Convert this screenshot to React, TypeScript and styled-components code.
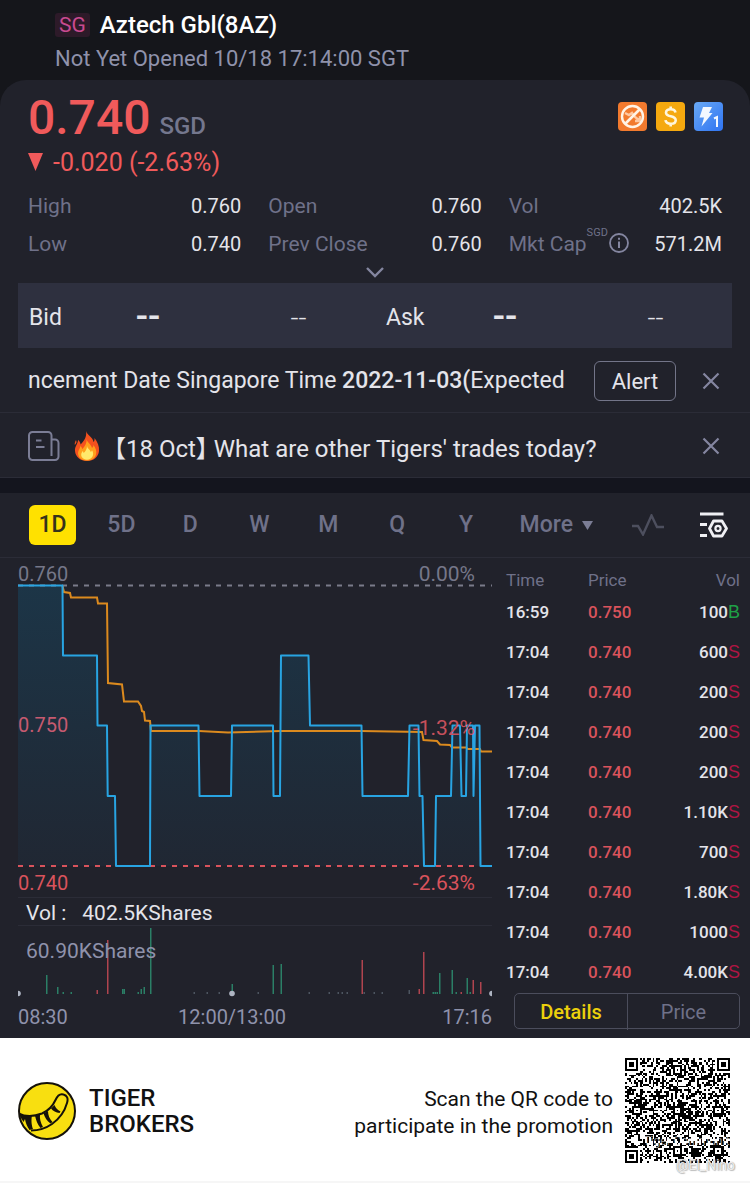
import React from 'react';
import styled, { createGlobalStyle } from 'styled-components';

const color = {
  page: '#15161b',
  panel: '#21222b',
  raised: '#2e303f',
  gap: '#14151e',
  line: '#2b2c37',
  text: '#e4e4ea',
  soft: '#8f92ab',
  muted: '#6f7189',
  red: '#f05a5b',
  yellow: '#ffe100',
};

const GlobalStyle = createGlobalStyle`
  * { box-sizing: border-box; }
  body {
    margin: 0;
    background: #ffffff;
    color: ${color.text};
    font-family: Roboto, "Noto Sans CJK SC", "Liberation Sans", sans-serif;
  }
  button {
    margin: 0;
    padding: 0;
    border: 0;
    background: none;
    color: inherit;
    font: inherit;
    cursor: pointer;
  }
  svg { display: block; }
  h1, h2, p, dl, dd, dt { margin: 0; font-weight: 400; }
`;

const Page = styled.main`
  background: ${color.page};
`;

const Header = styled.header`
  height: 80px;
  padding: 10px 24px 0 55px;
`;

const TitleRow = styled.div`
  display: flex;
  align-items: center;
  gap: 10px;
  height: 30px;
`;

const Market = styled.span`
  padding: 0 4px;
  border-radius: 3px;
  background: #2d1a29;
  color: #c94a90;
  font-size: 21px;
  line-height: 24px;
`;

const Title = styled.h1`
  color: #ffffff;
  font-size: 24px;
  font-weight: 500;
  line-height: 30px;
`;

const Status = styled.p`
  color: ${color.soft};
  font-size: 22px;
  line-height: 38px;
`;

const Quote = styled.section`
  border-radius: 26px 26px 0 0;
  background: ${color.panel};
`;

const PriceRow = styled.div`
  display: flex;
  align-items: flex-start;
  justify-content: space-between;
  height: 66px;
  padding: 10px 27px 0 28px;
`;

const Price = styled.p`
  color: ${color.red};
  font-size: 48px;
  font-weight: 500;
  line-height: 56px;
`;

const Currency = styled.span`
  margin-left: 9px;
  color: #74778e;
  font-size: 24px;
`;

const Badges = styled.div`
  display: flex;
  gap: 9px;
  padding-top: 12px;
`;

const Change = styled.p`
  display: flex;
  align-items: center;
  gap: 10px;
  height: 32px;
  padding-left: 28px;
  color: ${color.red};
  font-size: 25px;
`;

const Stats = styled.dl`
  display: grid;
  grid-template-columns: repeat(3, 1fr);
  column-gap: 27px;
  padding: 9px 28px 0;
`;

const Stat = styled.div`
  display: flex;
  align-items: center;
  justify-content: space-between;
  height: 38px;
  font-size: 20px;
  line-height: 24px;
`;

const StatName = styled.dt`
  display: flex;
  color: ${color.muted};
  font-size: 21px;
`;

const Unit = styled.span`
  margin-top: -6px;
  font-size: 11px;
  line-height: 14px;
`;

const ExpandButton = styled.button`
  display: flex;
  align-items: center;
  justify-content: center;
  width: 100%;
  height: 20px;
  padding-bottom: 2px;
`;

const BidAsk = styled.div`
  display: grid;
  grid-template-columns: 1fr 1fr;
  margin: 0 18px;
  background: ${color.raised};
`;

const Side = styled.div`
  display: grid;
  grid-template-columns: 80px 100px 1fr;
  align-items: center;
  height: 65px;
  padding-top: 3px;
  font-size: 23px;
  text-align: center;
`;

const SideName = styled.span`
  padding-left: 11px;
  text-align: left;
`;

const SidePrice = styled.strong`
  font-size: 36px;
  font-weight: 500;
  line-height: 40px;
`;

const SideSize = styled.span`
  padding-left: 24px;
  font-size: 28px;
  font-weight: 300;
`;

const Notice = styled.div`
  display: flex;
  align-items: center;
  height: 65px;
  padding: 2px 30px 0 28px;
  border-bottom: 1px solid ${color.line};
  font-size: 23px;
`;

const NoticeText = styled.p`
  flex: 1;
  min-width: 0;
  margin-right: 27px;
  overflow: hidden;
  white-space: nowrap;
  line-height: 34px;
`;

const Strong = styled.strong`
  font-weight: 500;
`;

const NewsLink = styled.a`
  display: flex;
  flex: 1;
  align-items: center;
  gap: 14px;
  min-width: 0;
  color: inherit;
  font-size: 24px;
  text-decoration: none;
  white-space: nowrap;
`;

const NewsTitle = styled.span`
  font-feature-settings: "halt";
`;

const AlertButton = styled.button`
  width: 82px;
  height: 40px;
  margin-right: 26px;
  border: 1px solid #737589;
  border-radius: 6px;
  font-size: 22px;
`;

const Tabs = styled.nav`
  display: flex;
  align-items: center;
  height: 80px;
  padding: 0 22px 0 18px;
  border-top: 15px solid ${color.gap};
  border-bottom: 1px solid ${color.line};
  background: ${color.panel};
  color: ${color.muted};
  font-size: 23px;
  font-weight: 500;
`;

const Tab = styled.button<{ $active?: boolean }>`
  display: flex;
  flex: 1;
  justify-content: center;
  line-height: 40px;

  span {
    min-width: 47px;
    border-radius: 6px;
    background: ${(p) => (p.$active ? color.yellow : 'transparent')};
    color: ${(p) => (p.$active ? '#35331b' : 'inherit')};
  }
`;

const MoreButton = styled.button`
  display: flex;
  align-items: center;
  gap: 9px;
  margin: 0 39px 0 19px;
  line-height: 40px;
`;

const IconButton = styled.button`
  & + & { margin-left: 35px; }
`;

const MarketData = styled.section`
  display: grid;
  grid-template-columns: minmax(0, 1fr) 258px;
  background: ${color.panel};
`;

const Charts = styled.div`
  padding-left: 18px;
`;

const Plot = styled.div`
  position: relative;

  svg { width: 100%; }
`;

const PlotLabel = styled.span<{ $top: number; $right?: boolean; $tone?: string }>`
  position: absolute;
  top: ${(p) => p.$top}px;
  ${(p) => (p.$right ? 'right: 17px;' : 'left: 0;')}
  color: ${(p) => p.$tone || '#757789'};
  font-size: ${(p) => (p.$right ? 21 : 20)}px;
  line-height: 24px;
`;

const VolumeTitle = styled.p`
  display: flex;
  gap: 16px;
  height: 29px;
  padding-left: 8px;
  border-top: 1px solid ${color.line};
  border-bottom: 1px solid ${color.line};
  font-size: 21px;
  line-height: 30px;
`;

const VolumeLabel = styled.span`
  position: absolute;
  top: 13px;
  left: 8px;
  color: ${color.soft};
  font-size: 21px;
  line-height: 24px;
`;

const TimeAxis = styled.div`
  display: grid;
  grid-template-columns: 1fr auto 1fr;
  padding-top: 7px;
  color: ${color.soft};
  font-size: 20px;
  line-height: 24px;
`;

const AxisMiddle = styled.span`
  padding-right: 46px;
`;

const AxisEnd = styled.span`
  text-align: right;
`;

const Trades = styled.div`
  padding: 0 10px 9px 14px;
`;

const TradeTable = styled.table`
  width: 100%;
  border-collapse: collapse;
  table-layout: fixed;
  font-size: 17px;
  font-weight: 500;
  text-align: left;

  th {
    width: 70px;
    height: 34px;
    padding: 10px 0 0;
    color: ${color.muted};
    font-weight: 400;
  }
  th:first-child { width: 82px; }
  td { height: 40px; padding: 0; }
  th:last-child, td:last-child { width: auto; text-align: right; }
`;

const TradePrice = styled.td`
  color: #d9535c;
`;

const SideMark = styled.span<{ $buy: boolean }>`
  color: ${(p) => (p.$buy ? '#1fa046' : '#b01543')};
  font-family: "Liberation Sans", sans-serif;
  font-size: 18px;
  font-weight: 400;
`;

const Segments = styled.div`
  display: grid;
  grid-template-columns: 1fr 1fr;
  height: 36px;
  margin: 1px 0 0 8px;
  border: 1px solid #4b4d5c;
  border-radius: 5px;
  line-height: 36px;
`;

const Segment = styled.button<{ $active?: boolean }>`
  color: ${(p) => (p.$active ? '#ecd00c' : color.muted)};
  font-size: 20px;
  font-weight: ${(p) => (p.$active ? 500 : 400)};

  & + & { border-left: 1px solid #4b4d5c; }
`;

const Footer = styled.footer`
  display: flex;
  align-items: center;
  height: 145px;
  padding: 2px 20px 0 18px;
  border-bottom: 2px solid #f6f6f6;
  background: #ffffff;
  color: #111111;
`;

const Brand = styled.p`
  flex: 1;
  margin-left: 13px;
  font-size: 24px;
  font-weight: 500;
  line-height: 26px;
`;

const Invite = styled.p`
  margin-right: 12px;
  padding-top: 4px;
  font-size: 21px;
  line-height: 27px;
  text-align: right;
`;

const QrBox = styled.div`
  position: relative;
`;

const Watermark = styled.span<{ $top: number; $size: number; $faint?: boolean }>`
  position: absolute;
  top: ${(p) => p.$top}px;
  right: -5px;
  color: ${(p) => (p.$faint ? '#ffffff99' : '#ffffffdd')};
  font-size: ${(p) => p.$size}px;
  line-height: 16px;
  text-shadow: ${(p) => (p.$faint ? 'none' : '0 0 1px #777777, 1px 1px 1px #99999999')};
  white-space: nowrap;
`;

const pricePoints =
  '18,585.5 62.5,585.5 63,655.5 97,655.5 97.5,725.5 107,725.5 107.7,796 115,796 116,866 150,866 150.5,725.5 198.5,725.5 199.5,796 231,796 232,725.5 273,725.5 273.5,796 280,796 281,655.5 308.5,655.5 310,725.5 361.5,725.5 362.5,796 408,796 409.5,725.5 418.5,725.5 419.5,796 422.5,796 424,866 435,866 436,796 451,796 452.5,725.5 460,725.5 461.5,796 466,796 467,725.5 473,725.5 473.5,796 475,725.5 479.5,725.5 480.5,866 492,866';

const averagePoints =
  '62.5,586 64,592 70,593 71,597.5 97,597.5 98,603.5 107,603.5 108,683 122,684.5 124,701.5 138,701.5 141,706 142,711 144,712 145,720.5 150,721 151,731 199,731 228,732.5 281,731 361,731 422,732 423.5,740 437,741 440,744.5 450,745 452,747.5 466,747.5 468,749 480,749 481,751.5 492,751.5';

type Bar = [x: number, height: number, tone: 'g' | 'r' | 'n'];

const bars: Bar[] = [
  [46.5, 19, 'g'], [57.5, 7, 'g'], [63, 2, 'g'], [71, 2, 'g'], [97, 4, 'r'], [107.5, 54, 'r'],
  [122.5, 5, 'g'], [124, 5, 'g'], [138, 2, 'g'], [141, 5, 'g'], [144, 7, 'g'], [150.5, 66, 'g'],
  [194, 2, 'n'], [207, 2, 'n'], [219, 2, 'n'], [232, 10, 'g'], [258, 2, 'n'], [273, 29, 'g'],
  [281, 30, 'g'], [309, 2, 'n'], [329, 2, 'n'], [338, 2, 'n'], [342, 2, 'n'], [347, 2, 'n'],
  [362, 34, 'r'], [364, 2, 'n'], [374, 2, 'n'], [382, 2, 'n'], [409, 4, 'n'], [419, 5, 'r'],
  [423.5, 42, 'r'], [433, 2, 'g'], [435, 2, 'g'], [437, 2, 'g'], [439.5, 21, 'g'], [452, 24, 'g'],
  [456, 2, 'g'], [461, 2, 'r'], [467, 16, 'g'], [470, 2, 'g'], [473, 14, 'r'], [480.5, 12, 'r'],
];

const barTone = { g: '#2b7f66', r: '#b0444f', n: '#4d5560' };

const trades: [string, string, string, 'B' | 'S'][] = [
  ['16:59', '0.750', '100', 'B'],
  ['17:04', '0.740', '600', 'S'],
  ['17:04', '0.740', '200', 'S'],
  ['17:04', '0.740', '200', 'S'],
  ['17:04', '0.740', '200', 'S'],
  ['17:04', '0.740', '1.10K', 'S'],
  ['17:04', '0.740', '700', 'S'],
  ['17:04', '0.740', '1.80K', 'S'],
  ['17:04', '0.740', '1000', 'S'],
  ['17:04', '0.740', '4.00K', 'S'],
];

const QR_SIZE = 57;

function buildQrPath(): string {
  let seed = 20221018;
  const random = () => {
    seed = (Math.imul(seed, 1664525) + 1013904223) >>> 0;
    return seed / 4294967296;
  };
  const grid = Array.from({ length: QR_SIZE }, () =>
    Array.from({ length: QR_SIZE }, () => random() < 0.5),
  );
  // Concentric squares: finder patterns have radius 3, alignment patterns radius 2.
  const stamp = (cx: number, cy: number, radius: number, light: number) => {
    const reach = radius === 3 ? 4 : 2;
    for (let dy = -reach; dy <= reach; dy++) {
      for (let dx = -reach; dx <= reach; dx++) {
        const row = grid[cy + dy];
        if (!row || cx + dx < 0 || cx + dx >= QR_SIZE) continue;
        const ring = Math.max(Math.abs(dx), Math.abs(dy));
        row[cx + dx] = ring !== light && ring <= radius;
      }
    }
  };
  [[28, 6], [6, 28], [28, 28], [50, 28], [28, 50], [50, 50]].forEach(([x, y]) => stamp(x, y, 2, 1));
  [[3, 3], [53, 3], [3, 53]].forEach(([x, y]) => stamp(x, y, 3, 2));
  return grid
    .map((row, y) => row.map((on, x) => (on ? `M${x} ${y}h1v1h-1z` : '')).join(''))
    .join('');
}

const qrPath = buildQrPath();

const CloseIcon = () => (
  <svg width="18" height="18" viewBox="0 0 18 18" fill="none" stroke="#8486a0" strokeWidth="2.200">
    <path d="M1.500 1.500l15 15M16.500 1.500l-15 15" />
  </svg>
);

const NoShortIcon = () => (
  <svg width="29" height="29" viewBox="0 0 29 29" fill="none">
    <rect width="29" height="29" rx="4" fill="#f27a2e" />
    <path d="M7 11l4 2 3-2 3 4 5 4M17 19h5v-5" stroke="#ffc9a2" strokeWidth="2.400" />
    <circle cx="14.500" cy="14.500" r="10.500" stroke="#fff3e6" strokeWidth="2.400" />
    <path d="M7.500 21.500l14-14" stroke="#fff3e6" strokeWidth="2.600" />
  </svg>
);

const DollarIcon = () => (
  <svg width="29" height="29" viewBox="0 0 29 29" fill="none">
    <rect width="29" height="29" rx="4" fill="#f5a90f" />
    <path
      d="M19.500 10.500c-.4-2.200-2.300-3.300-4.800-3.300-2.700 0-4.700 1.300-4.700 3.500 0 5 9.700 2.300 9.700 7.500 0 2.300-2 3.600-5 3.600-2.900 0-4.900-1.300-5.200-3.600M14.700 4.500v3M14.700 21.500v3"
      stroke="#fff6dc"
      strokeWidth="2.600"
    />
  </svg>
);

const LevelOneIcon = () => (
  <svg width="29" height="29" viewBox="0 0 29 29" fill="none">
    <defs>
      <linearGradient id="level" x1="0" y1="0" x2="1" y2="1">
        <stop offset="0" stopColor="#69a9f5" />
        <stop offset="1" stopColor="#2f74f2" />
      </linearGradient>
    </defs>
    <rect width="29" height="29" rx="4" fill="url(#level)" />
    <path d="M9 5h9l-3 6h3.500L7.500 24.500l2.500-9H5.500z" fill="#f3f8ff" />
    <path d="M20 16.500l3-1.500v10" stroke="#f3f8ff" strokeWidth="2" />
  </svg>
);

const InfoIcon = () => (
  <svg width="22" height="22" viewBox="0 0 22 22" fill="none" stroke="#8486a0">
    <circle cx="11" cy="11" r="9" strokeWidth="1.800" />
    <path d="M11 9.500v6.500M11 5.800v2" strokeWidth="2" />
  </svg>
);

const NewsIcon = () => (
  <svg width="32" height="30" viewBox="0 0 32 30" fill="none" stroke="#7b7d95" strokeWidth="2">
    <path d="M23.500 25V4.500a3.500 3.500 0 0 0-3.500-3.500H4.500A3.500 3.500 0 0 0 1 4.500v21A3.500 3.500 0 0 0 4.500 29H27a3.500 3.500 0 0 0 3.500-3.500V12A3.500 3.500 0 0 0 27 8.500h-3.500" />
    <path d="M8 9.500h5.500M8 16h8.500" />
  </svg>
);

const FireIcon = () => (
  <svg width="26" height="30" viewBox="0 0 26 30">
    <path
      d="M12 0c1 4 7 6 7.500 11 1-1 1.200-2.500 1-4 3 4 5 8 4.500 13-.6 6-5.500 10-12 10S1.500 26 1 20C.6 15 4 13 4 9c1.500 1 2.500 2.500 2.500 4.500C10 10 13 6 12 0z"
      fill="#f4511e"
    />
    <path d="M2 9c-1 2-1.500 3-1.200 5C2.500 12.500 3 11 2 9z" fill="#e8501f" />
    <path
      d="M12.500 8c.5 3.500 4.500 5 5.500 9 1-.8 1.500-1.800 1.500-3 2 3 3.500 6 2.500 9.500-1.200 4-4.500 6-9 6s-8-2-8.800-6C3.500 20 6 18 6.500 15c1 .8 1.600 2 1.600 3.200C11 15.500 13 12 12.500 8z"
      fill="#ff9f1c"
    />
    <path
      d="M13 15c.3 2.500 3 3.500 3.800 6 .6-.4 1-1 1.200-1.800 1.400 2 1.500 4.500.5 6.300-1 2-3 3.200-5.500 3.200s-4.700-1.200-5.500-3.200c-.8-2 0-4 1.200-5.500.5.500.8 1.200.9 2C11.500 20.500 13 18 13 15z"
      fill="#ffe96b"
    />
  </svg>
);

const WaveIcon = () => (
  <svg width="32" height="22" viewBox="0 0 32 22" fill="none" stroke="#4d4f5e" strokeWidth="2.400">
    <path d="M0 12h6l5 8.500L19.500 1.500 25 13h7" />
  </svg>
);

const ChartSettingsIcon = () => (
  <svg width="29" height="26" viewBox="0 0 29 26" fill="none" stroke="#f0f0f4">
    <path d="M1 2h23.500M1 12.500h7M1 23.500h7" strokeWidth="2.800" />
    <path d="M14.500 9h8.500l4.500 7.500L23 24h-8.500L10.500 16.500z" strokeWidth="2.800" strokeLinejoin="round" />
    <circle cx="19" cy="16.500" r="2.600" strokeWidth="2.200" />
  </svg>
);

const TigerLogo = () => (
  <svg width="58" height="58" viewBox="0 0 58 58" fill="none">
    <defs>
      <clipPath id="coin"><circle cx="29" cy="29" r="28" /></clipPath>
    </defs>
    <circle cx="29" cy="29" r="28" fill="#f8df10" />
    <g clipPath="url(#coin)" stroke="#15120a" strokeWidth="2">
      <path d="M0 31c7 4 16 3.500 24 .5 8-3.500 11-8 13.500-13.500 2-4.500 5-6.500 8-5.500 3.500 1 5 4 3.500 8.500-2.500 9-8 16-15 21-6.500 4.500-14 6.500-21 6.500" />
      <path d="M0 31c5 3 10 3.500 14 2.500-1 5-.5 9.500 1 13.500l-3.500 1C9 44 7.500 41 7 37l-1.500 3z" fill="#15120a" stroke="none" />
      <path d="M17 33.500l5-1c-.5 4 .5 8 3 12.500l-2.500 1c-3-3.500-4.500-7.500-5.500-12.500z" fill="#15120a" stroke="none" />
      <path d="M25.500 31.500l4.500-2.500c0 4 1.500 8 4.500 11l-2 1.500c-3.500-2.500-5.500-5.500-7-10z" fill="#15120a" stroke="none" />
      <path d="M33 26.500l3.500-3.500c1 3 3 5 6 6.500l-1 1.500c-3.500-.5-6.500-2-8.500-4.500z" fill="#15120a" stroke="none" />
    </g>
    <circle cx="29" cy="29" r="28" stroke="#15120a" strokeWidth="2" />
  </svg>
);

const PriceChart = () => (
  <svg height="339" viewBox="18 558 474 339" preserveAspectRatio="none" fill="none" role="img" aria-label="Intraday price">
    <defs>
      <linearGradient id="area" x1="0" y1="0" x2="0" y2="1">
        <stop offset="0" stopColor="#1c3547" />
        <stop offset="1" stopColor="#202733" />
      </linearGradient>
    </defs>
    <polygon points={`${pricePoints} 18,866`} fill="url(#area)" />
    <path d="M18 585.500H492" stroke="#7a7b8a" strokeWidth="2" strokeDasharray="5 6" />
    <path d="M18 866H492" stroke="#d9535c" strokeWidth="2" strokeDasharray="5 6" />
    <polyline points={averagePoints} stroke="#dc8a1e" strokeWidth="2" />
    <polyline points={pricePoints} stroke="#28a4e2" strokeWidth="2" strokeLinejoin="round" />
  </svg>
);

const VolumeChart = () => (
  <svg height="72" viewBox="18 926 474 72" preserveAspectRatio="none" role="img" aria-label="Intraday volume">
    {bars.map(([x, height, tone]) => (
      <rect key={x} x={x - 0.5} y={994 - height} width="1.500" height={height} fill={barTone[tone]} />
    ))}
    {[18, 232, 492].map((x) => (
      <circle key={x} cx={x} cy="993.500" r="2.800" fill="#aeb4c2" />
    ))}
  </svg>
);

const StatItem = ({ name, value }: { name: React.ReactNode; value: string }) => (
  <Stat>
    <StatName>{name}</StatName>
    <dd>{value}</dd>
  </Stat>
);

export default function App() {
  return (
    <Page>
      <GlobalStyle />
      <Header>
        <TitleRow>
          <Market>SG</Market>
          <Title>Aztech Gbl(8AZ)</Title>
        </TitleRow>
        <Status>Not Yet Opened 10/18 17:14:00 SGT</Status>
      </Header>

      <Quote>
        <PriceRow>
          <Price>
            0.740<Currency>SGD</Currency>
          </Price>
          <Badges>
            <NoShortIcon />
            <DollarIcon />
            <LevelOneIcon />
          </Badges>
        </PriceRow>
        <Change>
          <svg width="15" height="18" viewBox="0 0 15 18">
            <path d="M0 0h15L7.500 18z" fill={color.red} />
          </svg>
          -0.020 (-2.63%)
        </Change>
        <Stats>
          <StatItem name="High" value="0.760" />
          <StatItem name="Open" value="0.760" />
          <StatItem name="Vol" value="402.5K" />
          <StatItem name="Low" value="0.740" />
          <StatItem name="Prev Close" value="0.760" />
          <StatItem name={<>Mkt Cap<Unit>SGD</Unit><InfoIcon /></>} value="571.2M" />
        </Stats>
        <ExpandButton aria-label="Show more figures">
          <svg width="18" height="11" viewBox="0 0 18 11" fill="none" stroke="#8486a0" strokeWidth="2.400">
            <path d="M1 1l8 8 8-8" />
          </svg>
        </ExpandButton>
        <BidAsk>
          <Side>
            <SideName>Bid</SideName>
            <SidePrice>--</SidePrice>
            <SideSize>--</SideSize>
          </Side>
          <Side>
            <SideName>Ask</SideName>
            <SidePrice>--</SidePrice>
            <SideSize>--</SideSize>
          </Side>
        </BidAsk>
        <Notice>
          <NoticeText>
            ncement Date Singapore Time <Strong>2022-11-03(</Strong>Expected
          </NoticeText>
          <AlertButton>Alert</AlertButton>
          <button aria-label="Dismiss alert"><CloseIcon /></button>
        </Notice>
        <Notice>
          <NewsLink href="#news">
            <NewsIcon />
            <FireIcon />
            <NewsTitle>【18 Oct】 What are other Tigers' trades today?</NewsTitle>
          </NewsLink>
          <button aria-label="Dismiss news"><CloseIcon /></button>
        </Notice>
      </Quote>

      <Tabs>
        {['1D', '5D', 'D', 'W', 'M', 'Q', 'Y'].map((label) => (
          <Tab key={label} $active={label === '1D'}>
            <span>{label}</span>
          </Tab>
        ))}
        <MoreButton>
          More
          <svg width="11" height="9" viewBox="0 0 11 9">
            <path d="M0 0h11L5.500 9z" fill="#7b7d95" />
          </svg>
        </MoreButton>
        <IconButton aria-label="Indicators"><WaveIcon /></IconButton>
        <IconButton aria-label="Chart settings"><ChartSettingsIcon /></IconButton>
      </Tabs>

      <MarketData>
        <Charts>
          <Plot>
            <PriceChart />
            <PlotLabel $top={4}>0.760</PlotLabel>
            <PlotLabel $top={4} $right>0.00%</PlotLabel>
            <PlotLabel $top={155} $tone="#c65a70">0.750</PlotLabel>
            <PlotLabel $top={158} $tone="#c8505c" $right>-1.32%</PlotLabel>
            <PlotLabel $top={313} $tone="#d9535c">0.740</PlotLabel>
            <PlotLabel $top={313} $tone="#d9535c" $right>-2.63%</PlotLabel>
          </Plot>
          <VolumeTitle>
            <span>Vol :</span>
            <span>402.5KShares</span>
          </VolumeTitle>
          <Plot>
            <VolumeChart />
            <VolumeLabel>60.90KShares</VolumeLabel>
          </Plot>
          <TimeAxis>
            <span>08:30</span>
            <AxisMiddle>12:00/13:00</AxisMiddle>
            <AxisEnd>17:16</AxisEnd>
          </TimeAxis>
        </Charts>
        <Trades>
          <TradeTable>
            <thead>
              <tr>
                <th>Time</th>
                <th>Price</th>
                <th>Vol</th>
              </tr>
            </thead>
            <tbody>
              {trades.map(([time, price, volume, side], i) => (
                <tr key={i}>
                  <td>{time}</td>
                  <TradePrice>{price}</TradePrice>
                  <td>
                    {volume}
                    <SideMark $buy={side === 'B'}>{side}</SideMark>
                  </td>
                </tr>
              ))}
            </tbody>
          </TradeTable>
          <Segments>
            <Segment $active>Details</Segment>
            <Segment>Price</Segment>
          </Segments>
        </Trades>
      </MarketData>

      <Footer>
        <TigerLogo />
        <Brand>
          TIGER
          <br />
          BROKERS
        </Brand>
        <Invite>
          Scan the QR code to
          <br />
          participate in the promotion
        </Invite>
        <QrBox>
          <svg width="105" height="105" viewBox={`0 0 ${QR_SIZE} ${QR_SIZE}`} shapeRendering="crispEdges" role="img" aria-label="Promotion QR code">
            <path d={qrPath} fill="#000000" />
          </svg>
          <Watermark $top={75} $size={12} $faint>Tiger Community</Watermark>
          <Watermark $top={99} $size={14}>@El_Nino</Watermark>
        </QrBox>
      </Footer>
    </Page>
  );
}
